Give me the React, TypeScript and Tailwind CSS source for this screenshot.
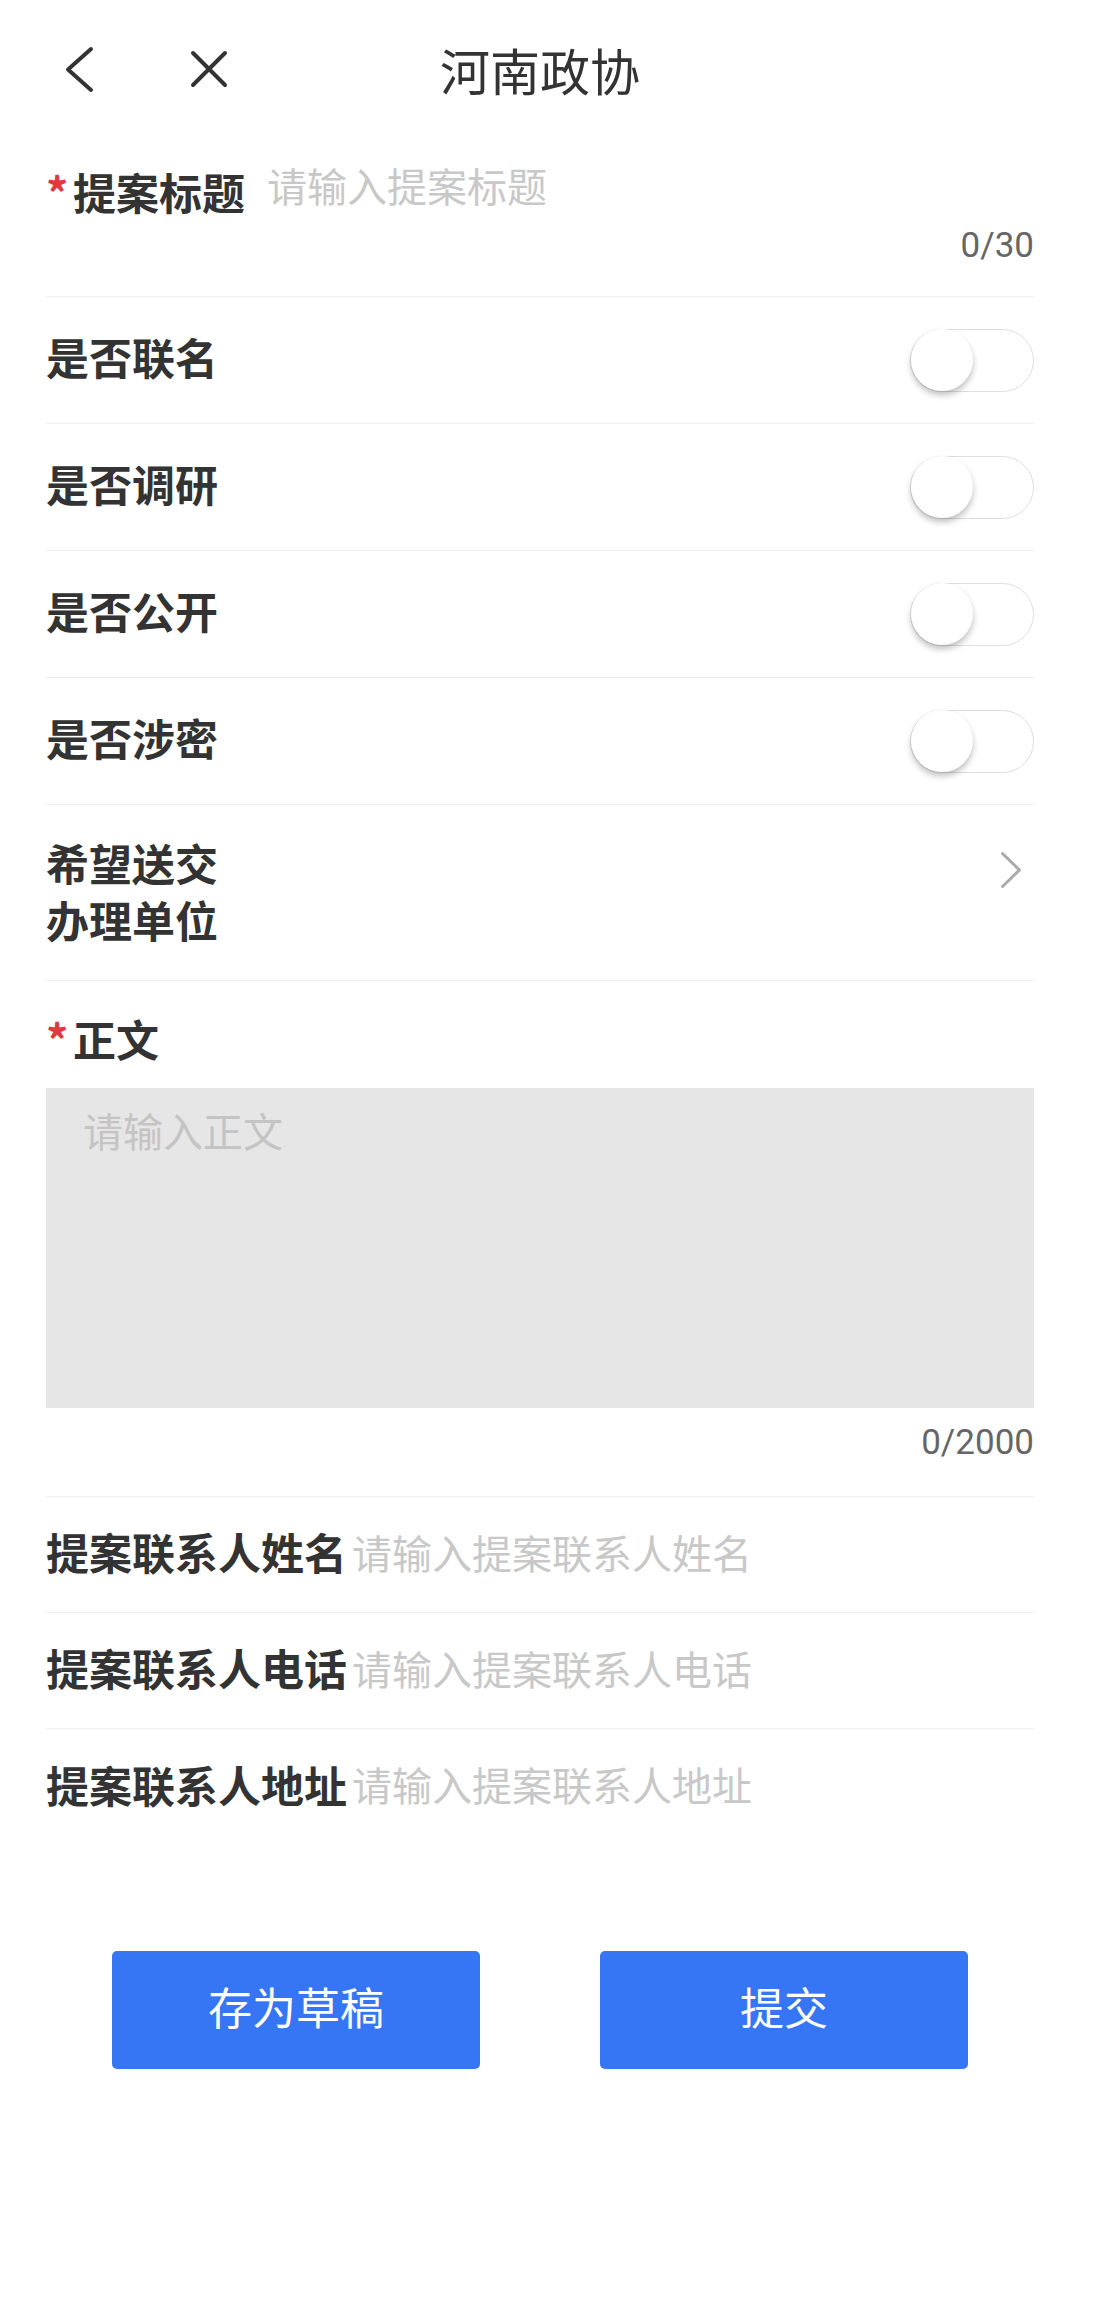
import React from 'react';

const FONT = { fontFamily: '"Noto Sans CJK SC", "Noto Sans", sans-serif' };
const NUM_FONT = { fontFamily: 'Roboto, "Noto Sans CJK SC", sans-serif' };

function Toggle(): React.ReactElement {
  return (
    <div className="w-[124px] h-[63px] rounded-full border border-[#dedede] bg-white flex items-center">
      <div className="w-[62px] h-[62px] rounded-full bg-white shadow-[0_4px_6px_rgba(0,0,0,0.25)]" />
    </div>
  );
}

function SwitchRow({ label }: { label: string }): React.ReactElement {
  return (
    <div className="h-[127px] flex items-center justify-between border-b border-[#eeeeee]">
      <span className="mb-[7px] text-[43px] leading-[43px] font-bold text-[#333333]">{label}</span>
      <Toggle />
    </div>
  );
}

function ContactRow({ label, last }: { label: string; last?: boolean }): React.ReactElement {
  return (
    <div
      className={
        last
          ? 'h-[116px] pb-[6px] flex items-center'
          : 'h-[116px] pb-[6px] flex items-center border-b border-[#eeeeee]'
      }
    >
      <span className="text-[43px] leading-[43px] font-bold text-[#333333] shrink-0">{label}</span>
      <span className="ml-[5px] text-[40px] leading-[40px] text-[#c8c8c8]">请输入{label}</span>
    </div>
  );
}

function Star(): React.ReactElement {
  return <span className="w-[27px] shrink-0 text-[44px] leading-[43px] font-bold text-[#e0393e]">*</span>;
}

export default function App(): React.ReactElement {
  return (
    <div className="w-full min-h-[2306px] bg-white" style={FONT}>
      {/* header */}
      <div className="h-[138px] flex items-center">
        <div className="w-[250px] shrink-0 flex items-center pl-[64px]">
          <svg width="32" height="50" viewBox="0 0 32 50" fill="none">
            <path d="M27 5 L4 25.5 L27 46" stroke="#333333" strokeWidth="4" strokeLinecap="round" strokeLinejoin="round" />
          </svg>
          <svg className="ml-[91px]" width="44" height="44" viewBox="0 0 44 44" fill="none">
            <path d="M6 6 L38 38 M38 6 L6 38" stroke="#333333" strokeWidth="4" strokeLinecap="round" />
          </svg>
        </div>
        <div className="flex-1 text-center text-[50px] leading-[50px] text-[#333333]">河南政协</div>
        <div className="w-[264px] shrink-0" />
      </div>

      <div className="pl-[46px] pr-[60px]">
        {/* title */}
        <div className="h-[159px] border-b border-[#eeeeee]">
          <div className="flex items-start pt-[27px]">
            <div className="flex pt-[5px]">
              <Star />
              <span className="text-[43px] leading-[43px] font-bold text-[#333333]">提案标题</span>
            </div>
            <span className="ml-[22px] text-[40px] leading-[40px] text-[#c8c8c8]">请输入提案标题</span>
          </div>
          <div className="mt-[15px] text-right text-[35px] leading-[35px] text-[#666666]" style={NUM_FONT}>
            0/30
          </div>
        </div>

        <SwitchRow label="是否联名" />
        <SwitchRow label="是否调研" />
        <SwitchRow label="是否公开" />
        <SwitchRow label="是否涉密" />

        {/* receiving unit */}
        <div className="h-[176px] flex items-center justify-between border-b border-[#eeeeee]">
          <div className="mb-[3px] text-[43px] leading-[57px] font-bold text-[#333333]">
            希望送交
            <br />
            办理单位
          </div>
          <svg className="self-start mt-[45px] mr-[11px]" width="24" height="40" viewBox="0 0 24 40" fill="none">
            <path d="M3.5 3.5 L20.5 20 L3.5 36.5" stroke="#ababab" strokeWidth="3" strokeLinecap="round" strokeLinejoin="round" />
          </svg>
        </div>

        {/* body */}
        <div className="pt-[36px] pb-[36px] border-b border-[#eeeeee]">
          <div className="flex">
            <Star />
            <span className="text-[43px] leading-[43px] font-bold text-[#333333]">正文</span>
          </div>
          <div className="mt-[28px] h-[320px] bg-[#e6e6e6] pt-[22px] pl-[37px]">
            <span className="text-[40px] leading-[40px] text-[#c4c4c4]">请输入正文</span>
          </div>
          <div className="mt-[17px] text-right text-[35px] leading-[35px] text-[#666666]" style={NUM_FONT}>
            0/2000
          </div>
        </div>

        <ContactRow label="提案联系人姓名" />
        <ContactRow label="提案联系人电话" />
        <ContactRow label="提案联系人地址" last />
      </div>

      {/* actions */}
      <div className="mt-[106px] pl-[112px] flex gap-[120px]">
        <button className="w-[368px] h-[118px] pb-[9px] rounded-[5px] bg-[#3675f4] text-white text-[44px] leading-[44px]">
          存为草稿
        </button>
        <button className="w-[368px] h-[118px] pb-[9px] rounded-[5px] bg-[#3675f4] text-white text-[44px] leading-[44px]">
          提交
        </button>
      </div>
    </div>
  );
}
